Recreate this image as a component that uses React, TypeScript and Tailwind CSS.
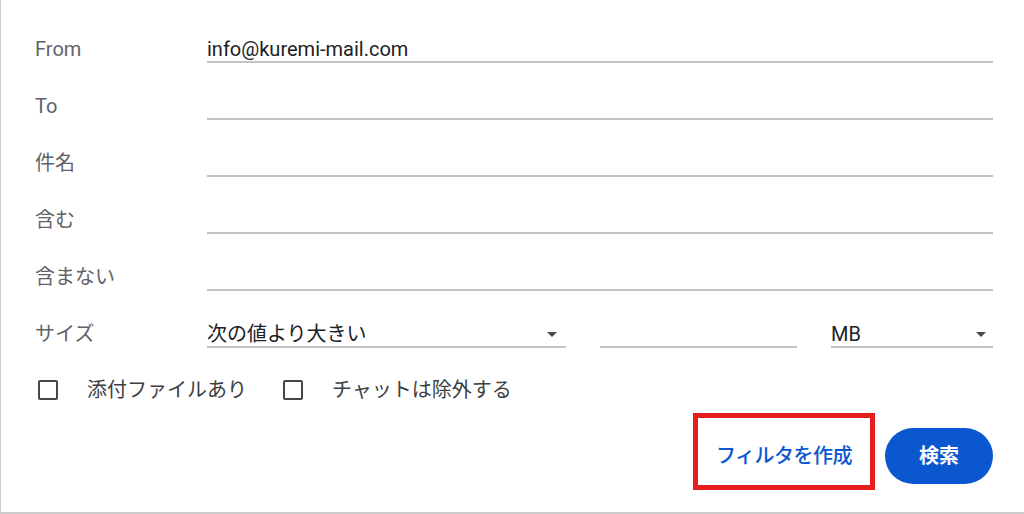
import React from "react";

function Caret() {
  return (
    <svg width="10" height="5" viewBox="0 0 10 5" className="shrink-0">
      <polygon points="0,0 10,0 5,5" fill="#4a4a4a" />
    </svg>
  );
}

function Row({ label, value }: { label: string; value?: string }) {
  return (
    <div className="flex items-end h-[57px]">
      <div className="w-[172px] pb-[2px] leading-[24px] text-[#5f6368]">{label}</div>
      <div className="flex-1 border-b-2 border-[#c4c4c4] leading-[24px] text-[#202124] h-[26px]">
        {value ?? ""}
      </div>
    </div>
  );
}

function Check({ label }: { label: string }) {
  return (
    <div className="flex items-center">
      <div className="w-[20px] h-[20px] border-2 border-[#474747] rounded-[2px]" />
      <span className="ml-[29px] text-[#3c4043] leading-[24px]">{label}</span>
    </div>
  );
}

export default function App() {
  return (
    <div className="w-[1024px] h-[514px] bg-white border-l border-b-2 border-[#cccccc] font-[Roboto,'Noto_Sans_CJK_JP',sans-serif] text-[20px] overflow-hidden">
      <div className="pl-[34px] pr-[31px] pt-[6px]">
        <Row label="From" value="info@kuremi-mail.com" />
        <Row label="To" />
        <Row label="件名" />
        <Row label="含む" />
        <Row label="含まない" />
        <div className="flex items-end h-[57px]">
          <div className="w-[172px] pb-[2px] leading-[24px] text-[#5f6368]">サイズ</div>
          <div className="w-[359px] border-b-2 border-[#c4c4c4] leading-[24px] text-[#202124] flex items-center justify-between pr-[9px]">
            <span>次の値より大きい</span>
            <Caret />
          </div>
          <div className="w-[197px] ml-[34px] border-b-2 border-[#c4c4c4] h-[26px]" />
          <div className="flex-1 ml-[34px] border-b-2 border-[#c4c4c4] leading-[24px] text-[#202124] flex items-center justify-between pr-[7px]">
            <span>MB</span>
            <Caret />
          </div>
        </div>
        <div className="flex items-center h-[40px] mt-[22px] pl-[3px]">
          <Check label="添付ファイルあり" />
          <div className="ml-[36px]">
            <Check label="チャットは除外する" />
          </div>
        </div>
        <div className="flex justify-end items-start mt-[3px]">
          <div className="w-[182px] h-[77px] border-[5px] border-[#e61e1e] flex items-center pl-[18px] pt-[8px]">
            <span className="text-[#0b57d0] font-medium leading-[24px] tracking-[-0.5px]">フィルタを作成</span>
          </div>
          <div className="ml-[10px] mt-[15px] w-[108px] h-[56px] rounded-full bg-[#0b57d0] flex items-center justify-center">
            <span className="text-white font-bold leading-[24px]">検索</span>
          </div>
        </div>
      </div>
    </div>
  );
}
